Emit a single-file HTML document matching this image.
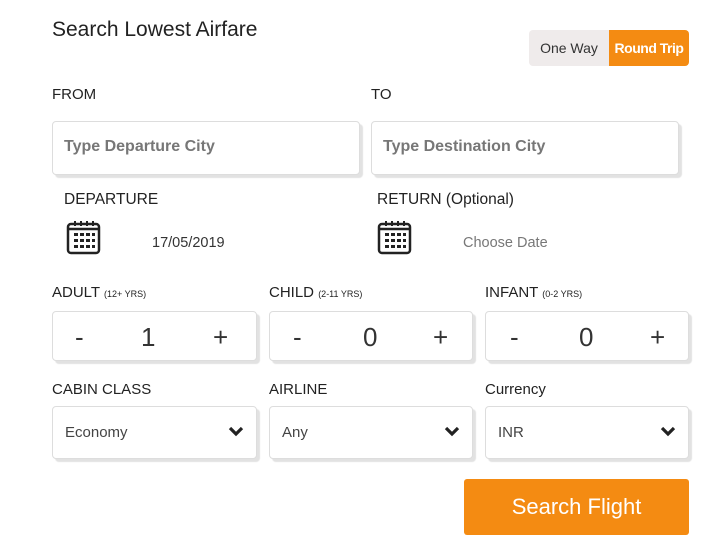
<!DOCTYPE html><html><head><style>
body{margin:0;width:727px;height:553px;background:#fff;font-family:"Liberation Sans",sans-serif;color:#222;position:relative;overflow:hidden}
.a{position:absolute}
.lbl{font-size:15px;color:#222}
.box{position:absolute;background:#fff;border:1px solid #ddd;border-radius:4px;box-shadow:3px 3px 1px #e2e2e2;box-sizing:border-box}
.ph{font-size:16px;font-weight:bold;color:#777;position:absolute;left:11px;top:16px}
.cnt{font-size:26px;color:#333;position:absolute;top:10px}
.sel{font-size:15px;color:#444;position:absolute;left:12px;top:17px}
.chev{position:absolute;right:12px;top:19px}
small{font-size:9px}
</style></head><body>
<div class="a" style="left:52px;top:18px;font-size:21px;color:#222">Search Lowest Airfare</div>
<div class="a" style="left:529px;top:30px;width:80px;height:36px;background:#efebeb;border-radius:4px 0 0 4px;font-size:14px;color:#333;text-align:center;line-height:36px">One Way</div>
<div class="a" style="left:609px;top:30px;width:80px;height:36px;background:#f48b12;border-radius:0 4px 4px 0;font-size:14px;color:#fff;text-align:center;line-height:36px;font-weight:bold;letter-spacing:-0.5px">Round Trip</div>
<div class="a lbl" style="left:52px;top:86px">FROM</div>
<div class="a lbl" style="left:371px;top:86px">TO</div>
<div class="box" style="left:52px;top:121px;width:308px;height:54px"><span class="ph">Type Departure City</span></div>
<div class="box" style="left:371px;top:121px;width:308px;height:54px"><span class="ph">Type Destination City</span></div>
<div class="a lbl" style="left:64px;top:191px;font-size:15.5px">DEPARTURE</div>
<div class="a lbl" style="left:377px;top:191px;font-size:15.5px">RETURN (Optional)</div>
<svg class="a" style="left:66px;top:220px" width="36" height="36" viewBox="0 0 36 36"><rect x="2" y="4" width="31" height="29" rx="3" fill="none" stroke="#222" stroke-width="2.5"/><line x1="2" y1="9" x2="33" y2="9" stroke="#222" stroke-width="2.5"/><g stroke="#222" stroke-width="2"><line x1="9" y1="1" x2="9" y2="6"/><line x1="15" y1="1" x2="15" y2="6"/><line x1="21" y1="1" x2="21" y2="6"/><line x1="27" y1="1" x2="27" y2="6"/></g><g fill="#222"><rect x="8" y="13" width="4" height="3"/><rect x="14" y="13" width="4" height="3"/><rect x="20" y="13" width="4" height="3"/><rect x="26" y="13" width="3" height="3"/><rect x="8" y="19" width="4" height="3"/><rect x="14" y="19" width="4" height="3"/><rect x="20" y="19" width="4" height="3"/><rect x="26" y="19" width="3" height="3"/><rect x="8" y="25" width="4" height="3"/><rect x="14" y="25" width="4" height="3"/><rect x="20" y="25" width="4" height="3"/><rect x="26" y="25" width="3" height="3"/></g></svg>
<svg class="a" style="left:377px;top:220px" width="36" height="36" viewBox="0 0 36 36"><rect x="2" y="4" width="31" height="29" rx="3" fill="none" stroke="#222" stroke-width="2.5"/><line x1="2" y1="9" x2="33" y2="9" stroke="#222" stroke-width="2.5"/><g stroke="#222" stroke-width="2"><line x1="9" y1="1" x2="9" y2="6"/><line x1="15" y1="1" x2="15" y2="6"/><line x1="21" y1="1" x2="21" y2="6"/><line x1="27" y1="1" x2="27" y2="6"/></g><g fill="#222"><rect x="8" y="13" width="4" height="3"/><rect x="14" y="13" width="4" height="3"/><rect x="20" y="13" width="4" height="3"/><rect x="26" y="13" width="3" height="3"/><rect x="8" y="19" width="4" height="3"/><rect x="14" y="19" width="4" height="3"/><rect x="20" y="19" width="4" height="3"/><rect x="26" y="19" width="3" height="3"/><rect x="8" y="25" width="4" height="3"/><rect x="14" y="25" width="4" height="3"/><rect x="20" y="25" width="4" height="3"/><rect x="26" y="25" width="3" height="3"/></g></svg>
<div class="a" style="left:152px;top:235px;font-size:14.5px;color:#333">17/05/2019</div>
<div class="a" style="left:463px;top:235px;font-size:14.5px;color:#777">Choose Date</div>
<div class="a lbl" style="left:52px;top:284px">ADULT <small>(12+ YRS)</small></div>
<div class="a lbl" style="left:269px;top:284px">CHILD <small>(2-11 YRS)</small></div>
<div class="a lbl" style="left:485px;top:284px">INFANT <small>(0-2 YRS)</small></div>
<div class="box" style="left:52px;top:311px;width:205px;height:50px"><span class="cnt" style="left:22px">-</span><span class="cnt" style="left:88px">1</span><span class="cnt" style="left:160px">+</span></div>
<div class="box" style="left:269px;top:311px;width:204px;height:50px"><span class="cnt" style="left:23px">-</span><span class="cnt" style="left:93px">0</span><span class="cnt" style="left:163px">+</span></div>
<div class="box" style="left:485px;top:311px;width:204px;height:50px"><span class="cnt" style="left:24px">-</span><span class="cnt" style="left:93px">0</span><span class="cnt" style="left:164px">+</span></div>
<div class="a lbl" style="left:52px;top:381px">CABIN CLASS</div>
<div class="a lbl" style="left:269px;top:381px">AIRLINE</div>
<div class="a lbl" style="left:485px;top:381px">Currency</div>
<div class="box" style="left:52px;top:406px;width:205px;height:53px"><span class="sel">Economy</span><svg class="chev" width="16" height="11" viewBox="0 0 16 11"><path d="M2 2 L8 8 L14 2" fill="none" stroke="#222" stroke-width="3.2"/></svg></div>
<div class="box" style="left:269px;top:406px;width:204px;height:53px"><span class="sel">Any</span><svg class="chev" width="16" height="11" viewBox="0 0 16 11"><path d="M2 2 L8 8 L14 2" fill="none" stroke="#222" stroke-width="3.2"/></svg></div>
<div class="box" style="left:485px;top:406px;width:204px;height:53px"><span class="sel">INR</span><svg class="chev" width="16" height="11" viewBox="0 0 16 11"><path d="M2 2 L8 8 L14 2" fill="none" stroke="#222" stroke-width="3.2"/></svg></div>
<div class="a" style="left:464px;top:479px;width:225px;height:56px;background:#f48b12;border-radius:3px;color:#fff;font-size:22px;text-align:center;line-height:56px">Search Flight</div>
</body></html>
